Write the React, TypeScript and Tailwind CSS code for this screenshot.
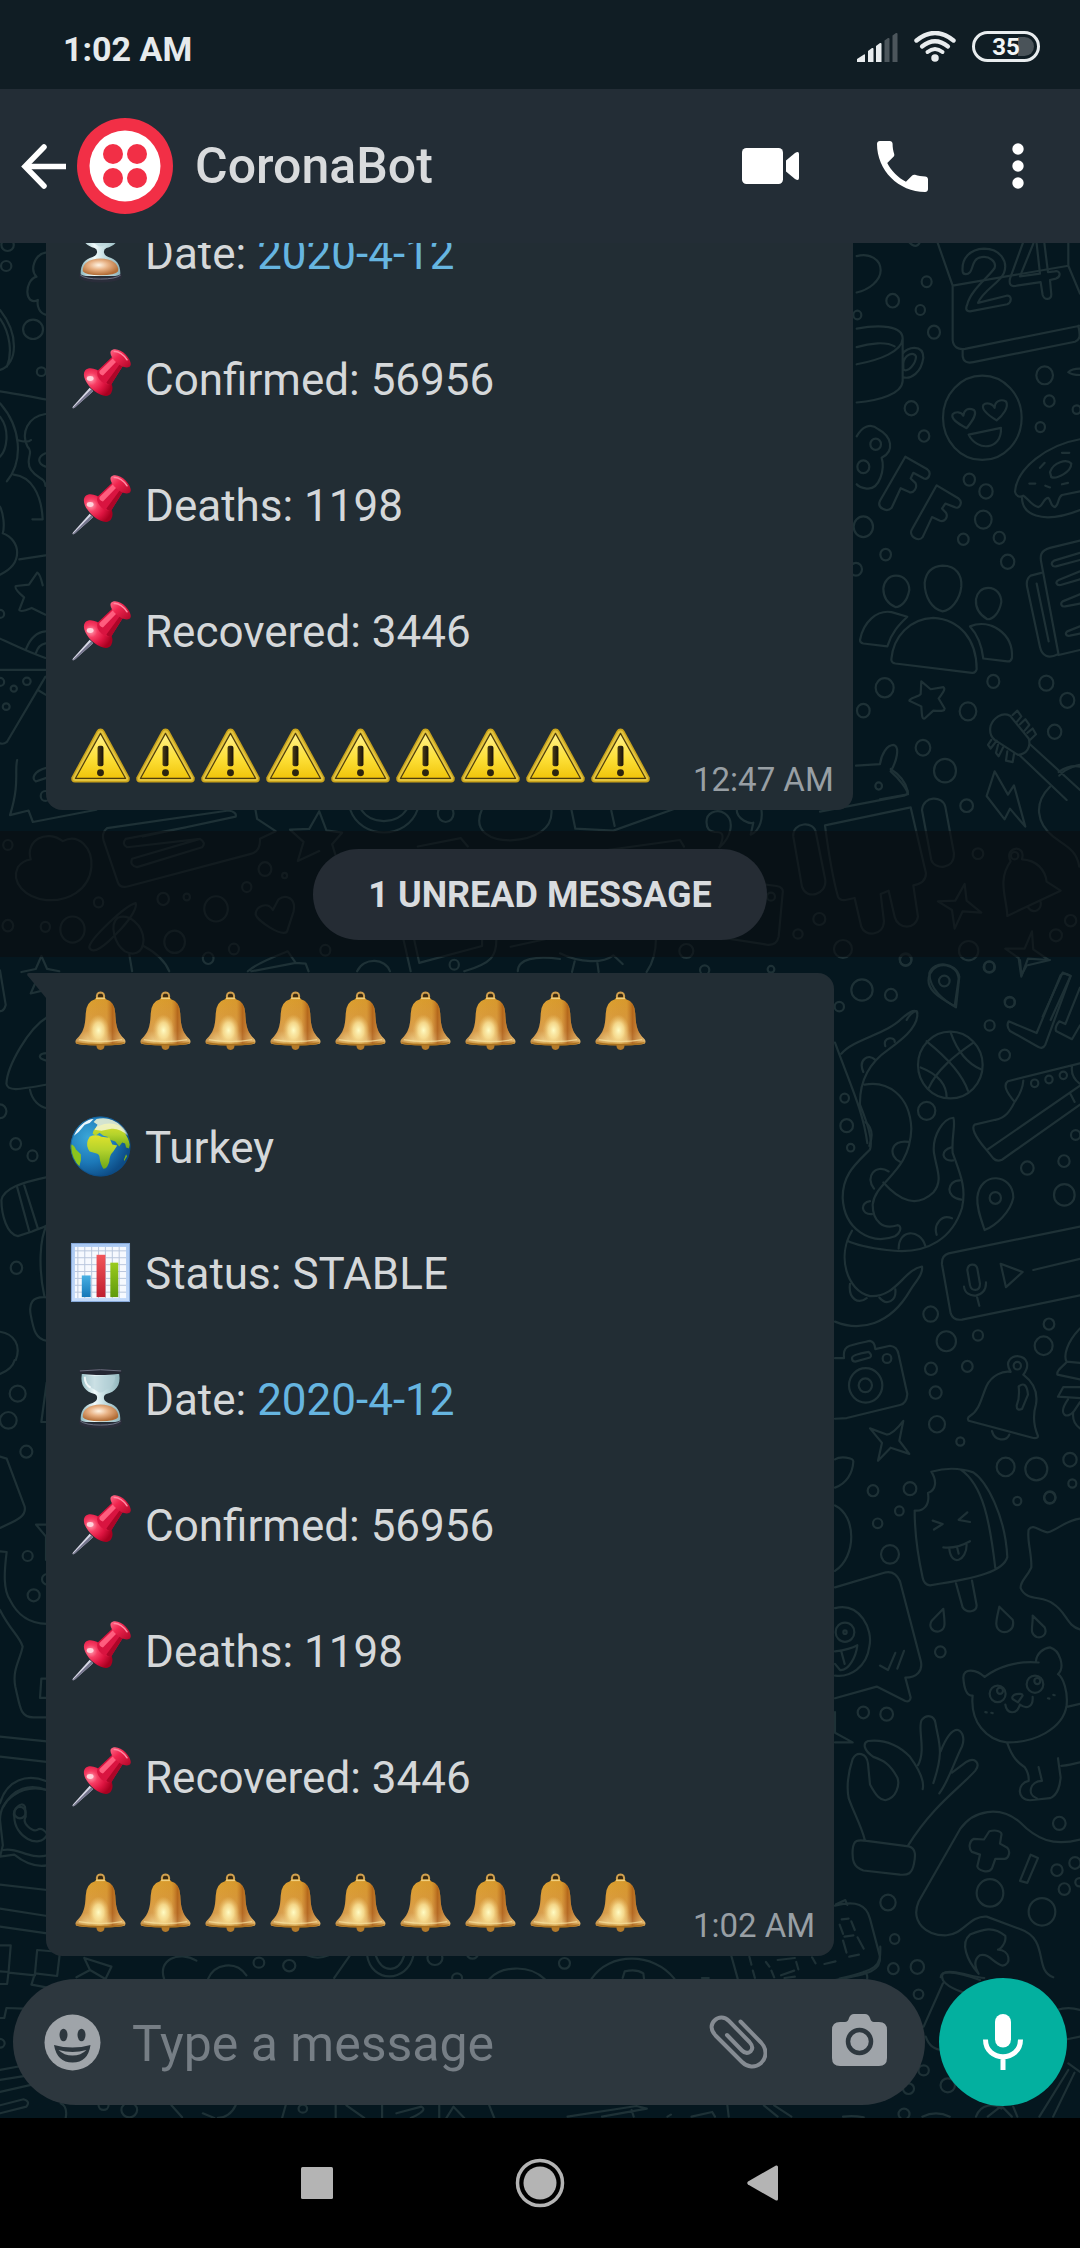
import type { ReactNode } from 'react';

/* ---------- Wallpaper ---------- */

type Sketch = {
  transform: string;
  rings: number[][];
  paths: string[];
};

const sketches: Sketch[] = [
  {
    transform: 'translate(820 240) scale(0.3333 0.3571)',
    rings: [
      [320, 117, 15], [218, 170, 19], [301, 196, 14], [342, 258, 18], [274, 471, 20], [312, 549, 16],
      [674, 379, 25], [688, 451, 16], [661, 524, 14], [770, 475, 12], [448, 671, 17], [498, 704, 20],
      [490, 783, 25], [430, 838, 16], [538, 834, 17], [563, 901, 20], [130, 803, 29], [197, 881, 16],
      [108, 922, 18], [194, 1254, 27], [520, 1236, 18], [679, 1241, 21], [742, 1289, 21], [444, 1320, 25],
      [130, 1318, 19], [704, 1377, 20], [309, 1422, 22], [375, 1486, 33], [176, 1529, 10], [112, 210, 12],
      [167, 572, 16], [130, 635, 18], [487, 498, 118],
    ],
    paths: [
      'M110 45C150 35 182 55 182 85C182 115 145 140 110 147M262 0C280 22 295 22 302 0',
      'M350 0L398 128L398 280C400 300 415 308 435 305L780 240M398 128L745 72V0M745 72L780 150M428 308V325C430 340 440 346 460 342L765 285C780 280 782 270 775 240',
      'M428 88C424 52 450 25 492 24C540 24 565 60 552 92C540 120 490 140 474 176L560 156C576 154 576 174 562 180L450 200C438 200 436 192 442 180C452 140 510 100 524 78C530 60 508 44 484 48C456 52 460 80 450 90C442 98 430 98 428 88Z',
      'M612 0L570 108C566 126 574 132 590 128L662 118L668 154C674 170 694 168 694 152L690 112L708 108C724 102 722 84 704 88L684 90L672 0M640 10L600 102L660 94L650 10',
      'M110 248C180 236 248 240 248 276C246 312 180 336 110 348M110 300C150 288 200 284 224 298M248 276V395C246 430 180 450 110 455M248 318C260 300 310 290 310 330C304 370 274 392 248 384M250 345C254 320 282 312 288 326C288 346 262 374 250 362Z',
      'M440 527C410 512 392 500 398 488C406 480 424 480 430 492C432 476 444 468 462 476C474 488 452 512 440 527ZM530 505C500 488 484 474 490 462C500 452 520 460 524 470C524 452 542 444 558 452C568 468 548 492 530 505ZM446 545L543 526C546 590 470 592 446 545Z',
      'M110 550C125 525 150 510 175 530C215 550 225 590 185 610C195 640 180 700 140 696C125 694 115 690 110 684',
      'M256 607L322 642C336 652 326 672 312 668L280 652L272 668L286 680C294 694 280 710 268 706L242 695L215 750C200 764 170 750 180 730Z',
      'M350 687L416 724C430 734 418 756 404 748L376 738L366 752L378 764C386 778 372 790 360 786L336 776L308 832C294 848 264 828 276 810Z',
      'M780 558C680 574 590 640 585 705C588 718 600 722 610 716C620 720 635 745 655 748C670 745 670 722 685 722C694 728 690 745 705 748C718 740 712 722 726 714L780 704M606 722C606 765 660 800 780 756M690 650C700 622 740 612 754 626C754 650 710 670 694 664ZM726 596L748 596M660 638L674 624M628 682L646 682M676 688L690 693M726 684L744 680',
      'M368 912C410 912 426 940 424 970C420 1010 390 1038 368 1040C336 1034 314 1000 314 960C318 930 334 914 368 912ZM228 940C254 940 268 960 268 980C262 1010 245 1028 226 1028C202 1018 190 1000 190 976C192 956 206 940 228 940ZM505 974C530 974 544 994 544 1014C538 1044 520 1062 502 1062C480 1050 466 1030 468 1006C472 986 486 974 505 974Z',
      'M120 1120C130 1070 170 1035 215 1042L262 1055C236 1078 214 1100 202 1138L130 1130Q120 1128 120 1120ZM214 1174C220 1110 270 1060 340 1058C420 1062 470 1120 470 1202Q466 1214 456 1212L226 1186Q214 1184 214 1174ZM450 1082C510 1060 580 1100 576 1170Q572 1182 562 1180L490 1172C486 1140 474 1106 450 1082Z',
      'M780 842L690 862C660 870 660 886 664 904L716 1162L780 1148M664 932L632 940C620 948 618 958 622 974L660 1140C666 1164 684 1174 714 1160M650 962L686 1124M780 876L702 898C690 904 696 916 708 914L780 896M780 928L716 952C704 958 710 968 722 966L780 950M780 992L728 1012C720 1018 724 1028 736 1026L780 1018M780 1082L742 1096C734 1102 738 1110 750 1108L780 1102',
      'M304 1236L332 1258L370 1252C376 1256 374 1262 356 1284L374 1312C374 1318 370 1320 340 1318L314 1340C306 1342 306 1334 304 1306L268 1290C268 1282 296 1280 302 1272Z',
      'M512 1360C520 1340 545 1320 570 1332L626 1396C634 1420 620 1440 594 1442L524 1400C512 1390 508 1376 512 1360ZM578 1330L592 1318L604 1334L590 1350M600 1356L616 1342L628 1358L614 1374M622 1380L638 1368L648 1384L630 1400M530 1402L512 1424L504 1414L514 1400M550 1420L536 1446L528 1436L534 1414M582 1440L578 1462L558 1458L562 1432M630 1412L780 1540M598 1442L740 1568M718 1500C740 1476 780 1470 780 1470',
      'M108 1472L180 1468C184 1440 200 1414 222 1414C240 1420 230 1460 212 1488C240 1510 262 1540 264 1552L180 1566',
      'M745 370C755 360 780 360 780 360M745 370C755 378 780 378 780 378',
    ],
  },
  {
    transform: 'translate(560 700) scale(0.3333 0.3333)',
    rings: [
      [1220, 317, 19], [1254, 461, 16], [778, 657, 18], [714, 702, 14], [849, 747, 27], [1226, 752, 29],
      [1532, 662, 17], [1488, 706, 18], [1037, 778, 18], [1288, 801, 17], [906, 870, 32], [993, 885, 18],
      [1350, 907, 15], [838, 920, 14], [1153, 843, 16], [379, 753, 21], [434, 810, 14], [633, 590, 12],
      [1364, 467, 11], [633, 808, 10],
    ],
    paths: [
      'M780 335L1035 286Q1046 282 1043 272C1036 245 1020 225 992 207M1052 322L795 376C806 460 820 540 834 590Q840 602 856 600L884 594L904 680C914 710 970 710 972 664L962 582L986 572L1004 650C1014 690 1068 690 1074 650L1060 556C1086 552 1098 540 1098 520L1052 322',
      'M700 410C696 366 764 360 768 400L796 540C800 586 738 600 726 560ZM1086 330C1090 286 1148 286 1156 320L1182 460C1184 510 1124 510 1114 480Z',
      'M1304 214L1344 284L1362 256L1396 380L1350 326L1334 358L1280 288Z',
      'M1560 200C1540 196 1520 200 1496 216M1470 260C1420 310 1430 370 1480 410C1520 440 1550 450 1558 500',
      'M1352 484C1330 440 1400 430 1386 478C1430 480 1456 510 1460 545L1502 572L1342 648C1342 600 1310 540 1352 484ZM1404 622C1420 644 1446 630 1442 606',
      'M1214 552L1220 602L1264 638L1208 634L1184 686L1176 630L1134 604L1186 602ZM1416 694L1420 748L1466 780L1404 776L1384 830L1376 774L1336 746L1394 746Z',
      'M1108 820C1120 780 1190 786 1198 830L1188 922C1150 900 1110 870 1108 820ZM1508 818L1532 828L1472 960M1508 818L1448 950M1040 960C1050 940 1074 924 1072 940',
      'M34 328L46 386L160 392L340 328M154 332L164 378M440 370C436 340 470 324 494 340C524 360 516 410 478 442C500 396 480 396 464 396C446 394 440 382 440 370ZM530 328C530 360 570 372 580 368L572 404C604 390 608 350 604 328M0 470L360 420L372 440M600 552L650 558Q672 562 668 580L656 710Q650 738 620 734L480 712M0 760C60 790 130 790 160 766L188 792M44 784L36 816M112 788L116 816M288 714C288 750 278 790 260 816',
    ],
  },
  {
    transform: 'translate(820 960) scale(0.3333 0.3444)',
    rings: [
      [508, 20, 15], [569, 122, 15], [509, 190, 15], [554, 276, 16], [74, 401, 13], [80, 481, 19],
      [92, 545, 11], [320, 438, 26], [767, 508, 14], [732, 584, 17], [622, 604, 19], [733, 682, 31],
      [526, 691, 17], [332, 1028, 22], [379, 1107, 29], [474, 1090, 15], [687, 1057, 16], [671, 1120, 27],
      [333, 1187, 18], [442, 1180, 16], [347, 1256, 18], [351, 1348, 24], [421, 1398, 12], [557, 1472, 27],
      [649, 1478, 33], [750, 1451, 20], [757, 1520, 12], [159, 1541, 16], [270, 1535, 19], [136, 1235, 20],
      [137, 1235, 50], [201, 1157, 13], [391, 305, 97], [592, 1178, 11], [644, 358, 11], [687, 347, 11], [730, 335, 11],
      [257, 0, 17], [690, 1560, 17],
    ],
    paths: [
      'M64 272C100 230 200 215 245 170C270 150 292 136 292 160C290 200 240 235 205 260C160 290 118 340 120 420C140 470 160 520 150 550C110 590 68 620 68 690C72 780 150 830 225 802C245 790 245 770 232 770C190 784 158 760 158 710C166 640 270 620 274 490C270 390 200 350 134 362M45 240C90 360 130 440 142 532',
      'M190 646C240 700 290 720 340 675C370 640 350 610 342 560C336 510 370 460 400 458C408 480 394 510 398 560C420 620 440 660 426 720C400 800 330 860 200 842C150 836 110 828 82 815M96 786C50 860 80 960 150 976C230 980 250 900 306 890C310 910 290 930 270 960C210 1060 120 1080 45 1050',
      'M196 250C186 222 228 222 224 238M130 325C114 290 144 270 166 290M266 528C210 520 204 570 240 586M206 614C166 590 134 630 162 664M150 700C120 704 122 740 156 738M394 544C360 552 364 586 400 582M420 640C380 640 374 690 424 696M396 750C364 736 340 770 350 798M316 830C300 780 236 780 236 838M90 940C84 986 116 1000 140 982M178 980C200 1006 230 990 226 956M136 470C156 486 160 510 148 540',
      'M320 236C390 290 430 340 444 380M460 240C400 280 350 320 326 372M392 210C410 260 440 300 484 318M302 312C350 330 380 360 380 400',
      'M330 40C350 0 414 10 416 56L404 134C360 110 310 84 330 40ZM566 178L650 212L722 44Q730 34 752 46L676 246Q668 260 654 252L570 206Q558 192 566 178ZM780 80L736 186L718 178Q704 194 708 206L756 230L780 190M600 0L604 44L620 16L690 0',
      'M780 300L564 352C550 362 556 380 584 412C570 440 556 458 526 464L464 478C454 486 462 510 500 552L520 576Q530 586 546 580L780 420M610 350Q608 380 584 412M500 552L780 365M750 386L764 412M756 310Q752 340 780 360',
      'M494 784C482 750 470 720 472 690C480 610 580 620 580 690C572 730 530 770 494 784Z',
      'M780 774L386 852Q364 858 366 884L392 1026Q400 1048 426 1044L780 974M442 900C444 880 468 880 472 896L480 940C480 964 454 962 450 944ZM432 948C436 986 500 984 498 936M470 974L478 1004M542 882L608 906L558 950ZM640 900L780 868',
      'M45 1156H72C68 1120 80 1120 150 1106Q164 1108 166 1130L210 1120Q232 1122 236 1146L262 1260Q260 1288 240 1292L80 1330L45 1332M96 1156Q96 1146 146 1138Q158 1148 150 1154L106 1166Q96 1166 96 1156Z',
      'M150 1360L200 1378Q220 1376 250 1338L238 1396L268 1434L212 1416L174 1454L186 1402Z',
      'M572 1196C550 1162 580 1150 592 1150C624 1152 630 1180 610 1204C640 1226 654 1256 648 1290C636 1330 644 1360 654 1382Q654 1390 640 1388L446 1338Q440 1330 450 1324C480 1306 484 1270 500 1236C516 1206 548 1192 572 1196ZM516 1368C524 1398 560 1398 568 1378M596 1238Q620 1220 624 1262L606 1304Q590 1310 590 1294Q600 1270 596 1238Z',
      'M780 1070C740 1110 730 1150 740 1166L780 1170M740 1168C720 1186 710 1194 712 1204L780 1218M780 1240H730L714 1268L780 1272M744 1276C710 1324 744 1334 762 1310L780 1284M760 1312C756 1336 766 1350 780 1360',
      'M45 1450C60 1440 100 1444 100 1456C98 1490 80 1520 45 1532',
    ],
  },
  {
    transform: 'translate(820 1440) scale(0.3333 0.3444)',
    rings: [
      [238, 206, 13], [173, 242, 14], [210, 332, 27], [592, 177, 12], [689, 168, 17], [361, 615, 16],
      [130, 791, 17], [200, 796, 19], [75, 558, 28], [75, 558, 5], [718, 1113, 19], [711, 1249, 17],
      [765, 1228, 17], [733, 1304, 17], [666, 1370, 40], [510, 1315, 40], [204, 1343, 23], [224, 1449, 14],
      [220, 1535, 16], [292, 1530, 20], [533, 737, 24], [645, 709, 25], [540, 728, 9], [652, 700, 9], [778, 1284, 12],
    ],
    paths: [
      'M334 92Q400 74 460 94C500 120 556 220 562 340C550 380 480 400 330 422Q312 420 308 400C290 320 284 260 284 205C310 208 330 190 324 154C348 146 352 120 334 92ZM422 86C490 130 510 240 526 372M408 416L428 486C440 504 470 500 470 480L456 408M338 234L368 244L342 260M442 210L416 232L450 238M370 312Q410 316 450 294M388 316C394 370 440 350 440 304M412 314L416 330',
      'M370 490L336 524C324 540 336 558 356 556C380 550 374 530 370 490ZM538 484L578 522C586 550 560 562 544 556C520 546 530 520 538 484ZM638 510L674 544C684 566 664 576 650 572C626 562 640 540 638 510Z',
      'M45 190C110 220 110 340 45 380M45 428L190 386Q224 376 240 410L302 640C310 670 290 690 256 690L272 748Q270 762 256 758L170 716L45 750M45 488C120 470 160 550 148 600C140 660 90 690 45 684M45 614Q90 608 112 596C108 630 86 670 60 668L45 650M64 614L74 650M180 655L204 668L226 618M232 664L252 612M45 790V850L98 878H45',
      'M780 228C740 232 710 262 684 268C660 268 640 240 626 260C620 290 636 330 634 370C620 400 600 410 602 430C620 470 670 450 700 476C740 500 740 540 780 550',
      'M494 688C530 660 590 640 656 646M494 688C470 666 430 660 430 690C432 720 440 745 458 742C450 820 500 870 560 878C640 880 730 840 740 770C744 730 730 690 714 680C736 660 720 610 690 602C670 604 650 620 648 642M578 752C570 738 606 732 608 742L594 762ZM556 768C560 796 590 800 600 768C620 784 640 774 638 746M496 790L500 791M514 792L518 793M684 750L688 751M700 740L704 741M562 880C580 930 600 940 614 950Q628 970 626 990C590 996 590 1046 630 1046L690 1040C716 1030 720 1000 722 980L714 924M656 950L666 990C630 990 620 1030 650 1040M724 946C740 946 760 940 780 936M744 774L780 766',
      'M134 1160C124 1120 100 1080 86 1040C78 1000 90 950 98 926C110 904 140 906 144 940L150 1000C170 1036 180 1044 196 1046C230 1040 240 1000 232 980C210 940 190 930 160 920C130 900 128 880 144 874C200 868 240 890 270 920C300 960 314 990 308 1014M294 944C320 900 290 830 306 812C320 796 342 800 346 820C356 880 374 900 340 996M362 904C380 860 396 840 414 842C430 848 434 870 426 890C400 940 386 990 358 1026M396 966L440 934C466 920 482 940 466 960C420 1010 340 1060 264 1178M98 1190C100 1160 114 1160 140 1164L266 1180C290 1186 286 1210 282 1230C276 1260 264 1264 240 1262L130 1250C100 1240 96 1220 98 1190Z',
      'M780 1160C700 1180 650 1160 600 1110C540 1060 460 1074 420 1130L296 1340C270 1400 320 1440 380 1438C430 1436 450 1380 500 1384L600 1420C690 1450 640 1540 700 1560M508 1136C530 1130 548 1138 544 1148L540 1172L562 1184C574 1196 564 1220 550 1216L526 1216L516 1244C504 1262 474 1248 472 1238L480 1204L456 1196C444 1184 448 1164 462 1158L492 1160ZM632 1204L654 1214L622 1286L600 1280Z',
      'M476 1550C440 1510 420 1460 450 1436C490 1420 520 1410 556 1440C560 1460 540 1480 534 1480C570 1480 576 1524 548 1526C520 1520 510 1490 480 1496C460 1510 464 1530 476 1550ZM362 1560C364 1540 400 1540 480 1568',
      'M45 1352C110 1336 140 1350 150 1390L180 1500C184 1540 150 1550 45 1568M48 1348L76 1336L82 1350',
    ],
  },
  {
    transform: 'translate(0 760) scale(0.3571 0.3827)',
    rings: [
      [22, 222, 13], [276, 372, 13], [22, 433, 15], [127, 436, 13], [203, 443, 34], [457, 363, 16],
      [523, 358, 9], [605, 389, 33], [489, 475, 29], [691, 332, 13], [742, 285, 18], [797, 302, 7],
      [583, 518, 15], [655, 494, 14], [911, 497, 14], [1272, 535, 13], [44, 1003, 15], [91, 1034, 14],
      [46, 1327, 16], [0, 918, 18], [127, 94, 13], [1248, 140, 22],
    ],
    paths: [
      'M86 260C70 210 130 180 176 212C220 190 260 230 256 280C250 340 190 370 130 366C70 360 30 320 50 280Q64 262 86 260Z',
      'M300 178L640 132Q664 136 660 148L400 200M300 178Q284 190 290 210L330 320Q336 336 360 330L700 246Q730 240 728 206L772 186L720 154L715 128M352 206L520 176M352 206Q340 220 356 228L560 206Q578 216 566 228L384 280Q362 276 370 258L560 206',
      'M894 134L914 184L958 190L930 220L940 250M894 134L866 180L812 182L850 214L834 264L894 238M980 128C1010 210 1140 210 1170 128M1010 128C1040 170 1110 170 1140 128M1350 128C1320 190 1380 210 1430 210C1500 206 1550 180 1544 128',
      'M380 374C350 380 250 470 250 490C260 510 290 490 340 440C370 410 384 384 380 374ZM330 412C360 400 400 430 402 470C400 510 370 510 350 500C320 480 306 430 330 412ZM362 508L370 552M402 486C430 500 460 520 474 552',
      'M780 364C800 350 830 360 822 396L804 448C790 464 720 420 716 404C716 380 750 370 764 392ZM694 552C720 530 790 506 806 500L828 530L704 552M828 530L856 532L864 552M1000 552C1020 514 1080 518 1092 552M1130 470L1150 552M1160 470L1174 530L1350 486V466M1390 470C1390 510 1380 530 1300 552M1430 488L1568 460M1450 552C1450 520 1500 510 1568 520M1170 226L1290 204L1310 226',
      'M60 554L100 546L116 512L132 546L166 552M80 562L100 580L86 610L130 600M0 550L16 640C10 660 0 656 0 656M132 672C80 700 20 800 18 846C20 866 50 862 132 848M132 766C110 766 100 780 132 786M84 862C90 890 110 906 132 910',
      'M132 1090C60 1104 10 1120 4 1150C4 1190 20 1240 50 1244L90 1232C120 1220 130 1220 132 1214M48 1116L82 1232M68 1112L106 1224M132 1214C110 1250 108 1330 124 1400M132 1404C90 1400 80 1420 86 1450C94 1490 100 1514 132 1518M0 1494C40 1500 60 1530 44 1568',
      'M48 0C40 30 56 60 28 144L80 132L92 162L270 130M132 20C90 30 90 50 100 56L132 46',
    ],
  },
  {
    transform: 'translate(0 300) scale(0.3444 0.3333)',
    rings: [[96, 88, 29], [120, 215, 13], [0, 942, 12], [78, 1144, 11], [40, 1166, 9], [18, 1220, 10], [0, 1146, 12], [18, -102, 15], [22, -165, 18]],
    paths: [
      'M0 30C54 100 54 190 0 210M0 56C30 100 36 160 20 200M0 274C40 280 90 290 132 298M0 310C60 380 70 480 20 544M0 350C30 390 20 450 0 470M132 342C80 350 60 400 80 440C100 460 70 480 90 510C110 540 130 530 132 558M50 420Q80 430 90 420M132 460C110 470 106 490 132 500M40 524C90 530 120 580 124 658H94M0 620C10 640 14 680 8 700C60 720 70 790 0 824M56 778L132 766',
      'M108 818L84 854L46 858Q40 866 70 892L56 930Q60 938 92 924L132 944M108 818Q116 820 124 856M0 1016C50 1040 90 1060 132 1074M76 1046C90 1010 110 996 132 994M104 1060C110 1040 120 1032 132 1030M0 1110H132M132 1130L20 1326C10 1334 0 1330 0 1330M110 1170L132 1184',
      'M132 -142C100 -136 86 -90 106 -70C70 -60 70 20 110 0C106 20 116 40 132 44',
    ],
  },
  {
    transform: 'translate(0 1360) scale(0.3333 0.3333)',
    rings: [[53, 101, 24], [25, 181, 25], [79, 275, 18], [83, 588, 15], [101, 706, 18], [142, 658, 16], [60, 1358, 17]],
    paths: [
      'M0 42C30 30 40 16 44 0M0 290L20 296L74 440C80 470 50 480 0 504M0 574L20 576C12 640 10 690 30 720C50 760 80 790 140 792M0 750C30 810 60 830 68 860C60 900 36 930 46 980C60 1040 60 1072 100 1072H140M140 68L124 186H140M140 494H108L138 530V600M140 956H124L120 1014H140M0 1130L140 1144M0 1190L140 1206M0 1330C20 1260 80 1240 140 1264M10 1340C40 1284 90 1270 140 1290',
    ],
  },
  {
    transform: 'translate(0 1780) scale(0.3571 0.3333)',
    rings: [[725, 548, 15], [810, 557, 17], [1218, 534, 21], [1323, 520, 16], [0, 790, 13], [362, 990, 22], [848, 986, 12], [290, 976, 14], [1280, 594, 14]],
    paths: [
      'M132 30C60 10 0 60 0 120L8 196L0 230L40 224C70 250 100 262 132 256M40 110C34 90 60 60 70 80L72 110C60 130 90 156 104 150C116 140 130 156 132 164C110 210 40 170 40 110M10 210C50 200 80 240 132 226M0 314L132 330M0 386L132 408M0 440L132 460M0 496H30L24 576L0 574M24 576L20 612H0M104 510L168 516L160 588L98 580ZM98 580L88 614L130 622M24 578L98 586M236 534L252 570L214 592M236 534L312 560L294 600M252 570L300 600M0 714H12L18 684L66 686M0 870L60 858M0 900L80 886M0 936L90 914M0 976L66 958Q86 964 74 980L0 1000M170 970Q190 980 184 1014',
      'M550 542C500 510 440 540 460 598M582 598C600 550 660 540 690 586M980 526L936 594M1028 526C1040 610 1140 610 1158 526M1052 526C1070 580 1116 580 1132 526M860 526Q890 540 920 526M1370 598C1400 560 1480 550 1526 598M480 976L510 1012M568 1000L600 1014M660 976C650 1000 630 1014 610 1014M800 976L790 1014M940 976V1014M970 976L1020 1014M1070 976V1014M1110 1000L1180 980Q1200 990 1150 1014M1230 976V1014M1250 1014L1270 980L1300 1014M1370 976L1384 1014',
    ],
  },
  {
    transform: 'translate(540 1850) scale(0.3444 0.3333)',
    rings: [[71, 340, 16], [1099, 433, 14], [1114, 661, 15], [1070, 716, 16], [1184, 706, 21], [1057, 792, 16]],
    paths: [
      'M150 386C200 306 330 306 390 386M240 384L246 364Q280 356 300 370L302 386M555 316L574 386M608 320L614 344M618 362L624 384M656 336L666 350M672 362L680 382M690 330L740 324M744 336L750 358M738 362L700 376M710 384L740 380M790 322L800 340M826 342L858 334M870 386C980 360 990 350 988 290M940 366Q952 370 950 386M470 384H490',
      'M876 208L896 206M904 214L914 240M870 224L880 252M884 260L910 256M922 262L940 296M880 272L890 308M898 320L926 314',
      'M1170 370C1160 390 1180 410 1230 428M1170 370C1190 356 1250 380 1290 384M1170 400L1114 530M1120 560C1130 590 1150 600 1170 600M1500 480C1530 470 1550 474 1568 480M1520 570L1568 560M1534 640L1568 666M1534 660L1450 800M1552 668L1490 800M1266 800C1280 760 1320 760 1340 776M1300 800L1340 768L1370 800M1374 770L1386 800M1110 800Q1150 780 1190 800M880 800Q910 796 940 802',
      'M80 800L280 768L310 776L180 800M266 780L272 800M440 800L500 786L508 800M544 766L548 800M650 766L690 800M680 766L730 800M370 800L380 794',
    ],
  },
];

function Wallpaper() {
  return (
    <svg
      aria-hidden="true"
      className="pointer-events-none absolute inset-0 size-full"
      viewBox="0 243 1080 1875"
      preserveAspectRatio="xMidYMid slice"
      fill="none"
      stroke="#1e3136"
      strokeWidth="2.200"
      strokeLinecap="round"
      strokeLinejoin="round"
    >
      {sketches.map((sketch) => (
        <g key={sketch.transform} transform={sketch.transform}>
          {sketch.rings.map(([cx, cy, r], i) => (
            <circle key={i} cx={cx} cy={cy} r={r} vectorEffect="non-scaling-stroke" />
          ))}
          {sketch.paths.map((d) => (
            <path key={d} d={d} vectorEffect="non-scaling-stroke" />
          ))}
        </g>
      ))}
    </svg>
  );
}

/* ---------- Emoji ---------- */

function EmojiPaints() {
  return (
    <svg aria-hidden="true" className="absolute size-0">
      <defs>
        <linearGradient id="warnFill" x1="0" y1="0" x2="0" y2="1">
          <stop offset="0" stopColor="#fff08a" />
          <stop offset="0.55" stopColor="#fde038" />
          <stop offset="1" stopColor="#f0c40a" />
        </linearGradient>
        <linearGradient id="warnMark" x1="0" y1="0" x2="1" y2="0">
          <stop offset="0" stopColor="#4a3c14" />
          <stop offset="1" stopColor="#17130c" />
        </linearGradient>
        <linearGradient id="bellTop" x1="0" y1="0" x2="0" y2="1">
          <stop offset="0" stopColor="#dda22c" />
          <stop offset="0.35" stopColor="#dc9f3a" />
          <stop offset="0.7" stopColor="#dca453" />
          <stop offset="0.9" stopColor="#efd08a" />
          <stop offset="1" stopColor="#c08628" />
        </linearGradient>
        <linearGradient id="bellSide" x1="0" y1="0" x2="1" y2="0">
          <stop offset="0" stopColor="#a8641c" stopOpacity="0.55" />
          <stop offset="0.25" stopColor="#c98534" stopOpacity="0.1" />
          <stop offset="0.62" stopColor="#c07426" stopOpacity="0.2" />
          <stop offset="0.74" stopColor="#a4500f" stopOpacity="0.7" />
          <stop offset="1" stopColor="#d09040" stopOpacity="0.3" />
        </linearGradient>
        <radialGradient id="bellGlow">
          <stop offset="0" stopColor="#fffcc4" />
          <stop offset="0.5" stopColor="#fbe59a" stopOpacity="0.8" />
          <stop offset="1" stopColor="#f0c870" stopOpacity="0" />
        </radialGradient>
        <linearGradient id="pinHead" x1="0" y1="0" x2="1" y2="1">
          <stop offset="0" stopColor="#ff6f8c" />
          <stop offset="0.4" stopColor="#f0254f" />
          <stop offset="1" stopColor="#b00628" />
        </linearGradient>
        <radialGradient id="pinBody" cx="0.25" cy="0.4" r="0.75">
          <stop offset="0" stopColor="#ff9fb2" />
          <stop offset="0.3" stopColor="#f63d63" />
          <stop offset="0.65" stopColor="#dd1440" />
          <stop offset="1" stopColor="#a80020" />
        </radialGradient>
        <radialGradient id="sea" cx="0.3" cy="0.35" r="0.7">
          <stop offset="0" stopColor="#3ba7d8" />
          <stop offset="0.6" stopColor="#1c78b8" />
          <stop offset="1" stopColor="#0d4c86" />
        </radialGradient>
        <linearGradient id="land" x1="0" y1="0" x2="0" y2="1">
          <stop offset="0" stopColor="#dfe22c" />
          <stop offset="0.45" stopColor="#b4d22c" />
          <stop offset="1" stopColor="#6fa818" />
        </linearGradient>
        <linearGradient id="chartFrame" x1="0" y1="0" x2="0" y2="1">
          <stop offset="0" stopColor="#a9c8f2" />
          <stop offset="1" stopColor="#c3dafa" />
        </linearGradient>
        <linearGradient id="barBlue" x1="0" y1="0" x2="0" y2="1">
          <stop offset="0" stopColor="#48b0e4" />
          <stop offset="1" stopColor="#1678b8" />
        </linearGradient>
        <linearGradient id="barRed" x1="0" y1="0" x2="0" y2="1">
          <stop offset="0" stopColor="#f2555a" />
          <stop offset="1" stopColor="#bf1f30" />
        </linearGradient>
        <linearGradient id="barGreen" x1="0" y1="0" x2="0" y2="1">
          <stop offset="0" stopColor="#9acb1e" />
          <stop offset="1" stopColor="#5f9a0c" />
        </linearGradient>
        <linearGradient id="glass" x1="0" y1="0" x2="1" y2="0">
          <stop offset="0" stopColor="#8fb9c0" />
          <stop offset="0.35" stopColor="#f0fafb" />
          <stop offset="0.6" stopColor="#c4dde1" />
          <stop offset="1" stopColor="#8eb4bb" />
        </linearGradient>
        <radialGradient id="sand" cx="0.45" cy="0.4" r="0.6">
          <stop offset="0" stopColor="#fff4e4" />
          <stop offset="0.45" stopColor="#e8b285" />
          <stop offset="1" stopColor="#b26c35" />
        </radialGradient>
      </defs>
    </svg>
  );
}

function Emoji({ label, children }: { label: string; children: ReactNode }) {
  return (
    <span className="flex w-[65px] shrink-0 justify-center pb-1">
      <svg role="img" aria-label={label} className="size-[61px]" viewBox="0 0 62 62">
        {children}
      </svg>
    </span>
  );
}

const Warning = () => (
  <Emoji label="Warning">
    <path d="M31 2.500Q33.600 2.500 35 5L60.500 52Q61.600 57 57 57.500H5Q.4 57 1.500 52L27 5Q28.400 2.500 31 2.500Z" fill="#c9a31c" />
    <path d="M31 4.200Q32.800 4.200 33.800 6L59 52.500Q59.600 55.800 56.500 56H5.500Q2.400 55.800 3 52.500L28.200 6Q29.200 4.200 31 4.200Z" fill="#e3c43e" />
    <path d="M31 7.500L56.500 53.300H5.500Z" fill="url(#warnFill)" stroke="#4d3c0c" strokeWidth="1.200" strokeLinejoin="round" />
    <rect x="28" y="20" width="6" height="21" rx="2" fill="url(#warnMark)" />
    <circle cx="31" cy="47.500" r="3.500" fill="#2c240f" />
  </Emoji>
);

const Bell = () => (
  <Emoji label="Bell">
    <path d="M27.500 8.500Q26.500 2.800 31 2.500Q35.500 2.800 34.500 8.500" fill="#3a2a10" stroke="#cf9f4e" strokeWidth="2" />
    <path d="M27 55.500Q26.500 61 31 61Q35.500 61 35 55.500Z" fill="#b37a2a" />
    <path
      d="M26.500 7.500H35.500L36.500 9.500Q45.500 12 46 24C46.500 36 48 43 55 49.500Q57 51.500 56 54Q55 55.800 31 56.200Q7 55.800 6 54Q5 51.500 7 49.500C14 43 15.500 36 16 24Q16.500 12 25.500 9.500Z"
      fill="url(#bellTop)"
    />
    <path
      d="M26.500 7.500H35.500L36.500 9.500Q45.500 12 46 24C46.500 36 48 43 55 49.500Q57 51.500 56 54Q55 55.800 31 56.200Q7 55.800 6 54Q5 51.500 7 49.500C14 43 15.500 36 16 24Q16.500 12 25.500 9.500Z"
      fill="url(#bellSide)"
    />
    <ellipse cx="29" cy="41" rx="11" ry="16" fill="url(#bellGlow)" />
    <path d="M6.500 53Q31 57 55.500 53Q54 56 31 56.300Q8 56 6.500 53Z" fill="#a8701f" />
    <path d="M9 50.500Q31 54.500 53 50.500" fill="none" stroke="#f8e2a0" strokeWidth="1.200" opacity="0.7" />
    <path d="M26.500 8.500H35.500" stroke="#f0d080" strokeWidth="1.500" />
  </Emoji>
);

const Pin = () => (
  <Emoji label="Pushpin">
    <path d="M20 40.500L23.500 44L5 60.500Q1.500 62.500 3 59.500Z" fill="#d8d9e6" />
    <path d="M23.500 44L5 60.500Q3 62 2.800 61L21.500 42Z" fill="#74748c" />
    <path d="M15.500 22.500C20 18.500 27 21 34 26.500C41 32 45.500 39 42 45.500C39.500 50.500 32 49.500 24.500 43.500C16.500 37 11.500 27.500 15.500 22.500Z" fill="url(#pinBody)" />
    <path d="M28 23L43.500 8.500L54.500 17L42 36.500Q38 39 32 34Q26 28.500 28 23Z" fill="#d91440" />
    <path d="M30 23.500L44 10L48 13L33.500 28Q29 27 30 23.500Z" fill="#ff5d7e" />
    <path d="M37 35L51 16L54 17.500L42 37Q39 38.500 37 35Z" fill="#ad0628" />
    <path d="M42 2.500C45.500-.5 52 2 56.500 6.500C61 11 63.500 17 60.500 19C57 21 51 18.500 47 14.500C42.500 10.500 39.500 5 42 2.500Z" fill="url(#pinHead)" />
    <path d="M45 3.500C49 3 55 7 58 12" fill="none" stroke="#ff8aa2" strokeWidth="1.500" strokeLinecap="round" />
    <ellipse cx="20.500" cy="31" rx="3.500" ry="2.500" fill="#ffd3dc" />
  </Emoji>
);

const Globe = () => (
  <Emoji label="Globe">
    <circle cx="31" cy="31" r="30.500" fill="url(#sea)" />
    <path d="M23 18Q24 12 30 10Q40 5 50 10Q58 18 61 29L60 33L57 32L56 28L53 27L50 31L46 26L40 24L38 21L34 20L30 17L26 20Z" fill="url(#land)" />
    <path d="M20 21Q26 18 32 21L40 22L43 29L48 30L44 36Q40 40 40 46Q38 54 34 53.500Q31 50 30 42Q30 39 27 38L20 36Q16 31 18 25Z" fill="url(#land)" />
    <path d="M.800 29Q4 29 6 34L11 39Q12 45 9.500 51Q2 44 .800 33Z" fill="#8cc41e" />
    <path d="M13 8Q18 3 24 3L20 7L15 9L9 16L4 20Q7 13 13 8Z" fill="#eaf6fb" />
    <path d="M27 3Q42 0 52 10Q57 14 59 20Q50 12 42 13L32 15L25 14L28 9L24 6Z" fill="#f2f5d4" opacity="0.85" />
    <path d="M55 44L57 39L58 41L55 46Z" fill="#7fb41a" />
    <circle cx="31" cy="31" r="30" fill="none" stroke="#0c4a80" strokeWidth="1" opacity="0.5" />
  </Emoji>
);

const Chart = () => (
  <Emoji label="Bar chart">
    <rect x="1" y="1" width="60" height="60" rx="1" fill="url(#chartFrame)" />
    <rect x="5" y="5" width="52" height="52" fill="#f6f9fe" />
    <path
      d="M8 5V57M15 5V57M22 5V57M29 5V57M36 5V57M43 5V57M50 5V57M5 9H57M5 16H57M5 23H57M5 30H57M5 37H57M5 44H57M5 51H57"
      stroke="#b9c6dc"
      strokeWidth="1"
    />
    <rect x="12" y="34" width="9" height="22" fill="url(#barBlue)" />
    <rect x="27" y="13" width="9" height="43" fill="url(#barRed)" />
    <rect x="41" y="21" width="8" height="35" fill="url(#barGreen)" />
    <rect x="1.500" y="1.500" width="59" height="59" fill="none" stroke="#86a8d8" />
  </Emoji>
);

const Hourglass = () => (
  <Emoji label="Hourglass">
    <path d="M12 6C10 18 16 24 25 26.500Q28 28 27.500 31Q27 34 23 35.500C14 38 10 44 11 55H51C52 44 48 38 39 35.500Q35 34 34.500 31Q34 28 37 26.500C46 24 52 18 50 6Z" fill="url(#glass)" />
    <path d="M16 8Q16 19 27 23Q31 27 35 23Q46 19 46 8Z" fill="#b3cfd5" opacity="0.6" />
    <path d="M15 9Q15 17 21 20" stroke="#fff" strokeWidth="2" fill="none" opacity="0.8" />
    <path d="M13 50C12 42 20 37 31 37C42 37 50 42 49 50Q46 54 31 54Q16 54 13 50Z" fill="url(#sand)" />
    <path d="M9.500 2.500Q31-1 52.500 2.500V4.500Q50 7 31 7Q12 7 9.500 4.500Z" fill="#242632" />
    <path d="M10 3Q31 .5 52 3" stroke="#6c7080" strokeWidth="1" fill="none" />
    <path d="M9.500 52Q12 55.500 31 56Q50 55.500 52.500 52V57Q48 61.500 31 61.500Q14 61.500 9.500 57Z" fill="#2a2d3a" />
    <path d="M10.500 54Q16 58 31 58Q46 58 51.500 54" stroke="#707486" strokeWidth="1" fill="none" />
  </Emoji>
);

/* ---------- Messages ---------- */

const nine = Array.from({ length: 9 }, (_, i) => i);

function Line({ icon, children }: { icon: ReactNode; children: ReactNode }) {
  return (
    <p className="flex h-[63px] shrink-0 items-center gap-3 text-[44px] leading-[63px] text-[#d5d8da]">
      {icon}
      <span>{children}</span>
    </p>
  );
}

function Stats() {
  return (
    <>
      <Line icon={<Hourglass />}>
        Date:{' '}
        <a href="#date" className="text-[#66b5e0]">
          2020-4-12
        </a>
      </Line>
      <Line icon={<Pin />}>Confirmed: 56956</Line>
      <Line icon={<Pin />}>Deaths: 1198</Line>
      <Line icon={<Pin />}>Recovered: 3446</Line>
    </>
  );
}

function Closing({ icon, time }: { icon: () => ReactNode; time: string }) {
  const Icon = icon;
  return (
    <div className="flex shrink-0 items-end gap-10">
      <div className="mb-[10px] flex h-[63px] items-center">
        {nine.map((i) => (
          <Icon key={i} />
        ))}
      </div>
      <time className="text-[33px] leading-10 text-[#989fa4]">{time}</time>
    </div>
  );
}

const bubble = 'relative ml-[46px] flex w-fit shrink-0 flex-col gap-[63px] rounded-2xl bg-[#222d34] pb-[10px] pl-[22px] pr-[19px]';

/* ---------- Page ---------- */

export default function App() {
  return (
    <div className="flex h-screen flex-col overflow-hidden bg-[#05171f] font-['Roboto',sans-serif]">
      <EmojiPaints />

      <div className="flex h-[89px] shrink-0 items-center justify-between bg-[#101d24] pl-[63px] pr-10">
        <span className="mt-2 text-[34px] font-bold leading-10 text-[#e6eaec]">1:02 AM</span>
        <div className="mt-1 flex items-center gap-4">
          <svg aria-label="Signal" role="img" className="h-[30px] w-[42px]" viewBox="0 0 42 30">
            <path d="M1 30V27L8 22.500Q9 22 9 23V30ZM12 30V19L16 16Q17.500 15.500 17.500 17V30ZM20 30V14L24 11Q25.500 10.500 25.500 12V30Z" fill="#e8ecee" />
            <path d="M28.500 30V8.500L32 6Q33.500 5.500 33.500 7V30ZM36.500 30V3.500L40 1Q41.500.5 41.500 2V30Z" fill="#4c565c" />
          </svg>
          <svg aria-label="Wi-Fi" role="img" className="h-[31px] w-[42px]" viewBox="0 0 42 31" fill="none" stroke="#e8ecee" strokeLinecap="round">
            <path d="M2.500 9.500Q21-5.500 39.500 9.500" strokeWidth="4.400" />
            <path d="M8 15.500Q21 5 34 15.500" strokeWidth="4.200" />
            <path d="M13.500 21Q21 15 28.500 21" strokeWidth="4" />
            <circle cx="21" cy="27" r="3" fill="#e8ecee" strokeWidth="1.500" />
          </svg>
          <div className="relative flex h-[31px] w-[68px] items-center justify-center overflow-hidden rounded-full border-[3px] border-[#e8ecee]">
            <span className="absolute inset-y-[3px] right-[3px] w-4 rounded-r-full bg-[#4a5359]" />
            <span className="relative text-2xl font-bold leading-6 text-[#f2f5f6]">35</span>
          </div>
        </div>
      </div>

      <header className="flex h-[154px] shrink-0 items-center bg-[#232d36] pl-5 pr-14 text-white">
        <button type="button" aria-label="Back" className="flex items-center gap-2">
          <svg className="size-[49px]" viewBox="0 0 49 49" fill="none" stroke="currentColor" strokeWidth="5.500" strokeLinecap="round" strokeLinejoin="miter">
            <path d="M24 5L5 24.500L24 44" />
            <path d="M6 24.500H46" strokeLinecap="butt" />
          </svg>
          <svg className="size-24" viewBox="0 0 96 96">
            <circle cx="48" cy="48" r="48" fill="#f22f46" />
            <circle cx="48" cy="48" r="35.500" fill="#fff" />
            <g fill="#f22f46">
              <circle cx="36" cy="36" r="10" />
              <circle cx="60" cy="36" r="10" />
              <circle cx="36" cy="60" r="10" />
              <circle cx="60" cy="60" r="10" />
            </g>
          </svg>
        </button>
        <h1 className="ml-[22px] flex-1 text-[50px] font-medium leading-[60px] text-[#d9dbdd]">CoronaBot</h1>
        <button type="button" aria-label="Video call">
          <svg className="h-9 w-[57px]" viewBox="0 0 57 36" fill="currentColor">
            <rect width="41" height="36" rx="4.500" />
            <path d="M44 12.500L53 5Q57 2.500 57 6V30Q57 33.500 53 31L44 23.500Z" />
          </svg>
        </button>
        <button type="button" aria-label="Voice call" className="ml-[78px]">
          <svg className="size-[51px]" viewBox="3 3 18 18" fill="currentColor">
            <path d="M6.620 10.790c1.440 2.830 3.760 5.140 6.590 6.590l2.200-2.200c.27-.27.67-.36 1.020-.24 1.120.37 2.330.57 3.570.57.550 0 1 .45 1 1V20c0 .55-.45 1-1 1-9.390 0-17-7.610-17-17 0-.55.450-1 1-1h3.500c.55 0 1 .45 1 1 0 1.250.2 2.450.57 3.570.11.35.030.740-.25 1.020l-2.200 2.200z" />
          </svg>
        </button>
        <button type="button" aria-label="More options" className="ml-[84px]">
          <svg className="h-12 w-3" viewBox="0 0 12 48" fill="currentColor">
            <circle cx="6" cy="7" r="5.700" />
            <circle cx="6" cy="24" r="5.700" />
            <circle cx="6" cy="41" r="5.700" />
          </svg>
        </button>
      </header>

      <main className="relative flex min-h-0 flex-1 flex-col overflow-hidden">
        <Wallpaper />

        <section aria-label="Messages" className="relative flex min-h-0 flex-1 flex-col justify-end pb-[22px]">
          <article className={bubble}>
            <Stats />
            <Closing icon={Warning} time="12:47 AM" />
          </article>

          <div className="mb-4 mt-[21px] flex h-[126px] shrink-0 items-center justify-center bg-[#0a0d10]/60">
            <span className="flex h-[91px] items-center rounded-full bg-[#252c34] px-[55px] pt-[2px] text-[36px] font-bold text-[#d9dcdf]">
              1 UNREAD MESSAGE
            </span>
          </div>

          <article className={`${bubble} rounded-tl-none pt-[18px]`}>
            <svg aria-hidden="true" className="absolute -left-5 top-0 h-7 w-5" viewBox="0 0 20 28">
              <path d="M3 0H20V25L2 3Q0 0 3 0Z" fill="#222d34" />
            </svg>
            <div className="flex h-[63px] items-center">
              {nine.map((i) => (
                <Bell key={i} />
              ))}
            </div>
            <Line icon={<Globe />}>Turkey</Line>
            <Line icon={<Chart />}>Status: STABLE</Line>
            <Stats />
            <Closing icon={Bell} time="1:02 AM" />
          </article>
        </section>

        <form className="relative flex shrink-0 items-center gap-[14px] pb-3 pl-[13px] pr-[13px]">
          <div className="flex h-[126px] min-w-0 flex-1 items-center rounded-full bg-[#2d373e] pl-[31px] pr-[38px] text-[#9fa4a9]">
            <button type="button" aria-label="Emoji">
              <svg className="size-[57px]" viewBox="0 0 57 57">
                <circle cx="28.500" cy="28.500" r="28" fill="currentColor" />
                <ellipse cx="19.500" cy="21" rx="4" ry="6.300" fill="#2d373e" />
                <ellipse cx="37.500" cy="21" rx="4" ry="6.300" fill="#2d373e" />
                <path d="M10 31Q28.500 36 46.500 31Q44 48.500 28.500 48.500Q13 48.500 10 31Z" fill="#2d373e" />
                <path d="M14.500 36Q28.500 40 42.500 36Q37 41.500 28.500 41.500Q20 41.500 14.500 36Z" fill="currentColor" />
              </svg>
            </button>
            <input
              type="text"
              aria-label="Message"
              placeholder="Type a message"
              className="ml-[31px] min-w-0 flex-1 bg-transparent pt-1 text-[50px] leading-[60px] text-[#d5d8da] outline-none placeholder:text-[#767e85]"
            />
            <button type="button" aria-label="Attach">
              <svg className="h-[54px] w-[58px]" viewBox="0 0 58 54" fill="none" stroke="#858b92" strokeWidth="4" strokeLinecap="round" strokeLinejoin="round">
                <path d="M31.500 6.500L52 27.500C59 35 57 44 51.500 48.500C46 53 38.500 52.500 33 47L6.500 20.500C1.500 15 1.500 9.500 5.500 5.500C9.500 1.500 15.500 1.500 20 6L40.500 27C44.500 31.500 43.500 34.500 41.500 36.500C39 38.500 36 38.500 33 35.500L18 20" />
              </svg>
            </button>
            <button type="button" aria-label="Camera" className="ml-[65px] pb-1">
              <svg className="h-[52px] w-[55px]" viewBox="0 0 55 52">
                <path d="M8 8H13Q16 8 17 4Q18.500 0 22 0H33Q36.500 0 38 4Q39 8 42 8H47Q55 8 55 16V44Q55 52 47 52H8Q0 52 0 44V16Q0 8 8 8Z" fill="currentColor" />
                <circle cx="27.500" cy="27.500" r="11.500" fill="none" stroke="#2d373e" strokeWidth="4.500" />
              </svg>
            </button>
          </div>
          <button type="button" aria-label="Record voice message" className="flex size-32 shrink-0 items-center justify-center rounded-full bg-[#03b09f] text-white">
            <svg className="h-14 w-10" viewBox="0 0 40 56" fill="none">
              <rect x="12" width="16" height="33.500" rx="8" fill="currentColor" />
              <path d="M2.500 25.500C2.500 48.500 37.500 48.500 37.500 25.500M20 42V56" stroke="currentColor" strokeWidth="5" />
            </svg>
          </button>
        </form>
      </main>

      <nav className="flex h-[130px] shrink-0 items-center justify-center gap-[182px] bg-black text-[#b4b4b4]">
        <button type="button" aria-label="Recent apps">
          <svg className="size-8" viewBox="0 0 32 32">
            <rect width="32" height="32" rx="1.500" fill="currentColor" />
          </svg>
        </button>
        <button type="button" aria-label="Home">
          <svg className="h-[50px] w-[50px]" viewBox="0 0 50 50">
            <circle cx="25" cy="25" r="22.500" fill="none" stroke="currentColor" strokeWidth="3.500" />
            <circle cx="25" cy="25" r="16.500" fill="currentColor" />
          </svg>
        </button>
        <button type="button" aria-label="Navigate back">
          <svg className="h-9 w-8" viewBox="0 0 32 36">
            <path d="M1 16.500L29 .5Q31 0 31 2V34Q31 36 29 35.500L1 19.500Q-.5 18 1 16.500Z" fill="currentColor" />
          </svg>
        </button>
      </nav>
    </div>
  );
}
